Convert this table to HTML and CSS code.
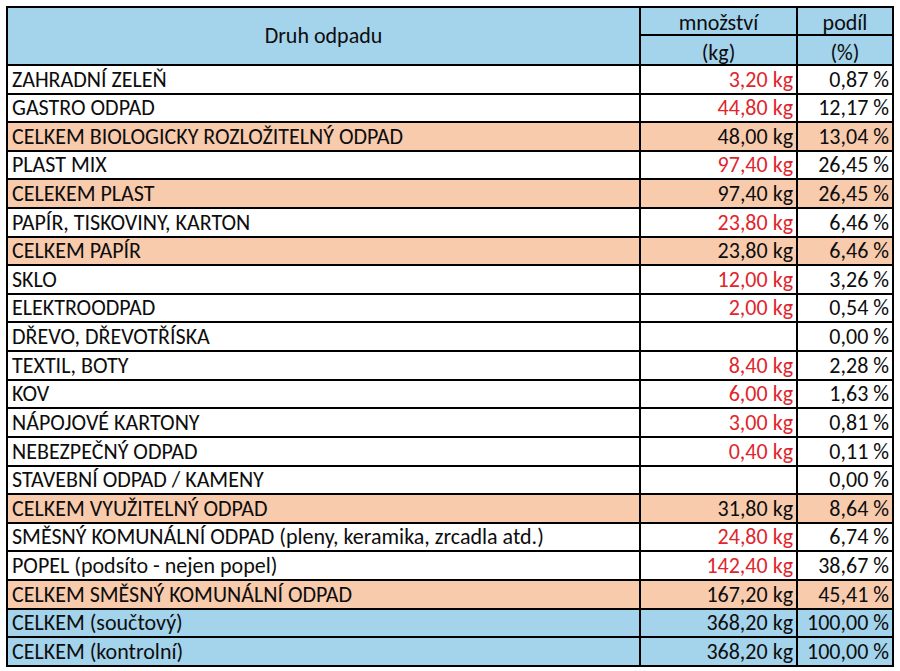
FILE: index.html
```html
<!DOCTYPE html>
<html lang="cs">
<head>
<meta charset="utf-8">
<link rel="stylesheet" href="styles.css">
</head>
<body>
<table class="waste">
  <colgroup>
    <col class="c-name">
    <col class="c-kg">
    <col class="c-pct">
  </colgroup>
  <thead>
    <tr class="h1">
      <th rowspan="2">Druh odpadu</th>
      <th>množství</th>
      <th>podíl</th>
    </tr>
    <tr class="h2">
      <th>(kg)</th>
      <th>(%)</th>
    </tr>
  </thead>
  <tbody>
    <tr><td>ZAHRADNÍ ZELEŇ</td><td class="num red">3,20 kg</td><td class="num">0,87 %</td></tr>
    <tr><td>GASTRO ODPAD</td><td class="num red">44,80 kg</td><td class="num">12,17 %</td></tr>
    <tr class="sum"><td>CELKEM BIOLOGICKY ROZLOŽITELNÝ ODPAD</td><td class="num">48,00 kg</td><td class="num">13,04 %</td></tr>
    <tr><td>PLAST MIX</td><td class="num red">97,40 kg</td><td class="num">26,45 %</td></tr>
    <tr class="sum"><td>CELEKEM PLAST</td><td class="num">97,40 kg</td><td class="num">26,45 %</td></tr>
    <tr><td>PAPÍR, TISKOVINY, KARTON</td><td class="num red">23,80 kg</td><td class="num">6,46 %</td></tr>
    <tr class="sum"><td>CELKEM PAPÍR</td><td class="num">23,80 kg</td><td class="num">6,46 %</td></tr>
    <tr><td>SKLO</td><td class="num red">12,00 kg</td><td class="num">3,26 %</td></tr>
    <tr><td>ELEKTROODPAD</td><td class="num red">2,00 kg</td><td class="num">0,54 %</td></tr>
    <tr><td>DŘEVO, DŘEVOTŘÍSKA</td><td class="num red"></td><td class="num">0,00 %</td></tr>
    <tr><td>TEXTIL, BOTY</td><td class="num red">8,40 kg</td><td class="num">2,28 %</td></tr>
    <tr><td>KOV</td><td class="num red">6,00 kg</td><td class="num">1,63 %</td></tr>
    <tr><td>NÁPOJOVÉ KARTONY</td><td class="num red">3,00 kg</td><td class="num">0,81 %</td></tr>
    <tr><td>NEBEZPEČNÝ ODPAD</td><td class="num red">0,40 kg</td><td class="num">0,11 %</td></tr>
    <tr><td>STAVEBNÍ ODPAD / KAMENY</td><td class="num red"></td><td class="num">0,00 %</td></tr>
    <tr class="sum"><td>CELKEM VYUŽITELNÝ ODPAD</td><td class="num">31,80 kg</td><td class="num">8,64 %</td></tr>
    <tr><td>SMĚSNÝ KOMUNÁLNÍ ODPAD (pleny, keramika, zrcadla atd.)</td><td class="num red">24,80 kg</td><td class="num">6,74 %</td></tr>
    <tr><td>POPEL (podsíto - nejen popel)</td><td class="num red">142,40 kg</td><td class="num">38,67 %</td></tr>
    <tr class="sum"><td>CELKEM SMĚSNÝ KOMUNÁLNÍ ODPAD</td><td class="num">167,20 kg</td><td class="num">45,41 %</td></tr>
    <tr class="total"><td>CELKEM (součtový)</td><td class="num">368,20 kg</td><td class="num">100,00 %</td></tr>
    <tr class="total"><td>CELKEM (kontrolní)</td><td class="num">368,20 kg</td><td class="num">100,00 %</td></tr>
  </tbody>
</table>
</body>
</html>
```

FILE: styles.css
```css
html, body {
  margin: 0;
  padding: 0;
  background: #ffffff;
}

body {
  padding: 6px 0 0 6px;
  font-family: Carlito, Calibri, "Open Sans", "Liberation Sans", sans-serif;
  font-size: 22px;
  color: #0d0d0d;
}

.waste {
  border-collapse: collapse;
  table-layout: fixed;
  width: 886px;
}

.c-name { width: 633px; }
.c-kg { width: 157px; }
.c-pct { width: 96px; }

.waste th,
.waste td {
  border: 2px solid #000;
  padding: 0 4px;
  white-space: nowrap;
  line-height: 22px;
  vertical-align: bottom;
}

.waste th {
  background: #a4d3ec;
  font-weight: normal;
  text-align: center;
}

.h1 th { height: 26px; }
.h2 th { height: 28px; }
.h1 th[rowspan] { vertical-align: middle; }

.waste td {
  height: 24.62px;
  padding-bottom: 2px;
  background: #fff;
}

.waste td.num {
  text-align: right;
  padding-right: 3px;
}

.red { color: #e0262c; }

.sum td { background: #f8cbad; }
.total td { background: #a4d3ec; }
```
